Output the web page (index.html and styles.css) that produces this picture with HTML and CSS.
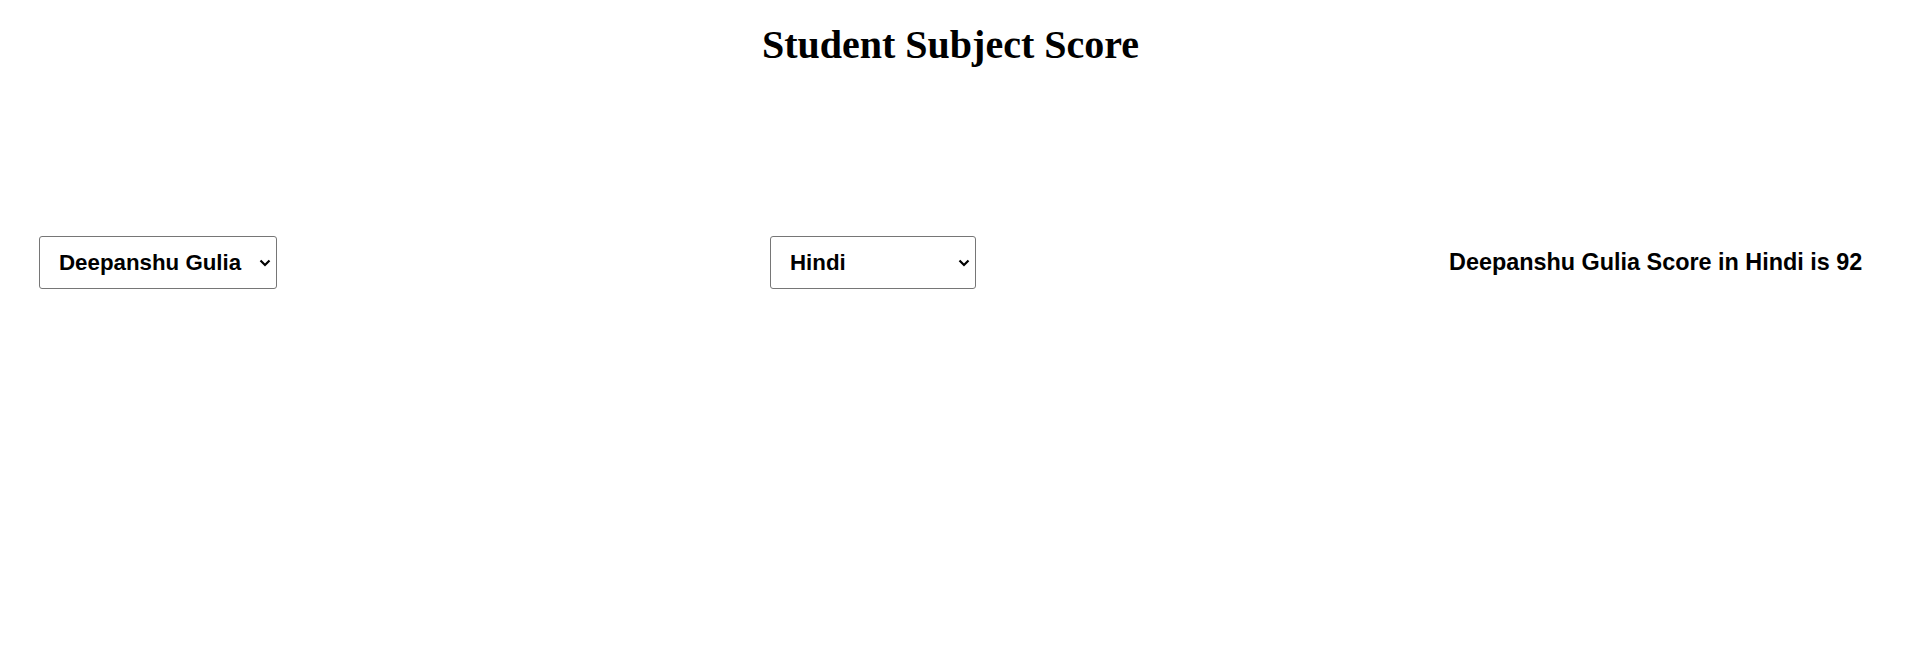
FILE: index.html
```html
<!DOCTYPE html>
<html>
<head>
<meta charset="utf-8">
<link rel="stylesheet" href="styles.css">
</head>
<body>
<h1 class="title">Student Subject Score</h1>
<div class="row">
  <select class="sel sel-student">
    <option>Deepanshu Gulia</option>
  </select>
  <select class="sel sel-subject">
    <option>Hindi</option>
  </select>
  <div class="result">Deepanshu Gulia Score in Hindi is 92</div>
</div>
</body>
</html>
```

FILE: styles.css
```css
html, body {
  margin: 0;
  padding: 0;
  background: #fff;
}
body {
  padding-top: 23px;
  font-family: "Liberation Serif", serif;
}
.title {
  margin: 0;
  text-align: center;
  font-family: "Liberation Serif", serif;
  font-size: 40px;
  font-weight: bold;
  line-height: 44px;
  color: #000;
  padding-right: 10px;
}
.row {
  display: flex;
  align-items: center;
  margin-top: 169px;
  padding-left: 39px;
}
.sel {
  -webkit-appearance: none;
  appearance: none;
  height: 53px;
  box-sizing: border-box;
  border: 1px solid #767676;
  border-radius: 3px;
  background-color: #fff;
  background-image: url("data:image/svg+xml,%3Csvg xmlns='http://www.w3.org/2000/svg' width='12' height='8' viewBox='0 0 12 8'%3E%3Cpath d='M1.5 1.5 L6 6 L10.5 1.5' fill='none' stroke='%23000' stroke-width='2.2'/%3E%3C/svg%3E");
  background-repeat: no-repeat;
  background-position: right 5px center;
  background-size: 12px 8px;
  color: #000;
  font-family: "Liberation Sans", Arial, sans-serif;
  font-size: 22.3px;
  font-weight: bold;
  padding: 0 20px 0 19px;
}
.sel-student {
  width: 238px;
}
.sel-subject {
  width: 206px;
  margin-left: 493px;
}
.result {
  margin-left: 473px;
  font-family: "Liberation Sans", Arial, sans-serif;
  font-size: 23.4px;
  font-weight: bold;
  color: #000;
}
```
